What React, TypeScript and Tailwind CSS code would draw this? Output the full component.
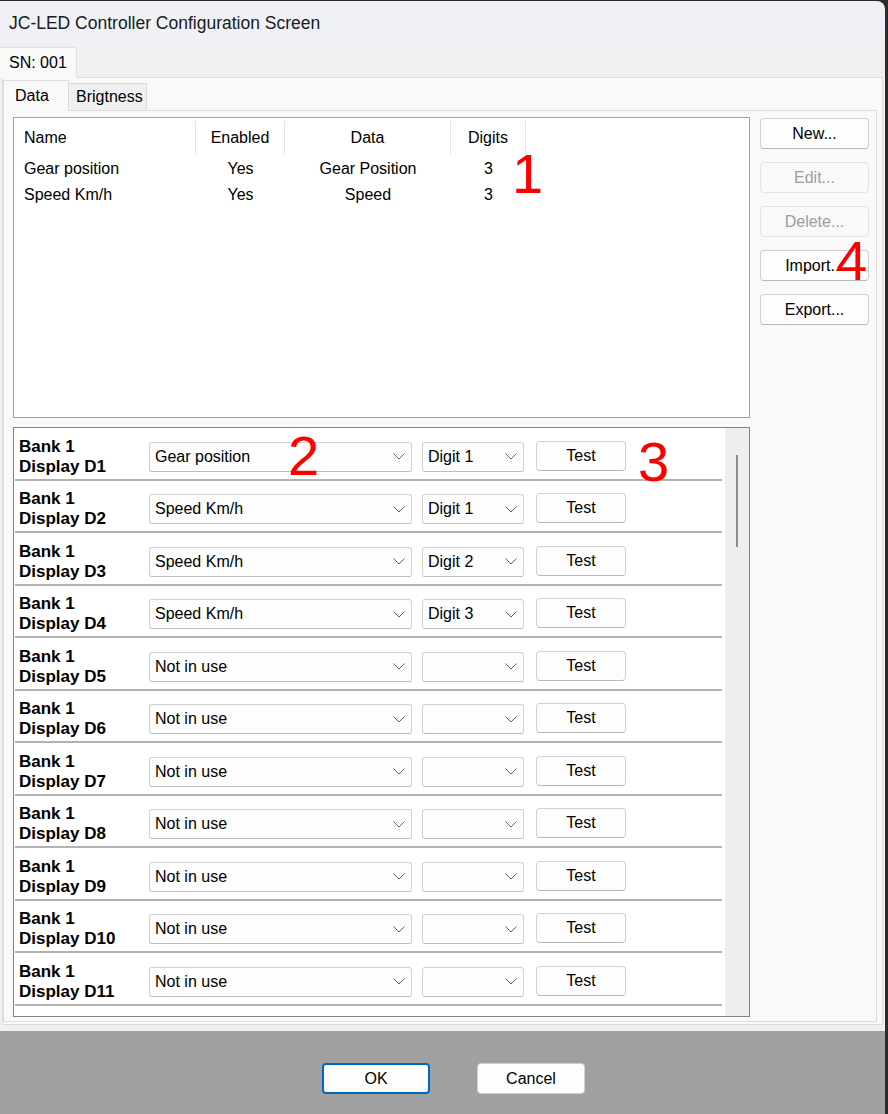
import React from "react";

const Chevron = () => (
  <svg width="12" height="7" viewBox="0 0 12 7" className="shrink-0">
    <path d="M0.5 0.5 L6 6 L11.5 0.5" fill="none" stroke="#606060" strokeWidth="1" />
  </svg>
);

type RowData = { n: string; src: string; digit: string };

const rows: RowData[] = [
  { n: "D1", src: "Gear position", digit: "Digit 1" },
  { n: "D2", src: "Speed Km/h", digit: "Digit 1" },
  { n: "D3", src: "Speed Km/h", digit: "Digit 2" },
  { n: "D4", src: "Speed Km/h", digit: "Digit 3" },
  { n: "D5", src: "Not in use", digit: "" },
  { n: "D6", src: "Not in use", digit: "" },
  { n: "D7", src: "Not in use", digit: "" },
  { n: "D8", src: "Not in use", digit: "" },
  { n: "D9", src: "Not in use", digit: "" },
  { n: "D10", src: "Not in use", digit: "" },
  { n: "D11", src: "Not in use", digit: "" },
];

function SideButton({ label, disabled }: { label: string; disabled?: boolean }) {
  return (
    <div
      className={
        disabled
          ? "h-[31px] rounded-[4px] border border-[#e3e3e3] bg-[#f9f9f9] flex items-center justify-center text-[16px] text-[#9d9d9d]"
          : "h-[31px] rounded-[4px] border border-[#d0d0d0] border-b-[#b8b8b8] bg-[#fdfdfd] flex items-center justify-center text-[16px] text-black"
      }
    >
      {label}
    </div>
  );
}

function DisplayRow({ r }: { r: RowData }) {
  return (
    <div className="h-[52.5px] shrink-0 border-b-2 border-[#b2b2b2] pt-[7px] pl-[4px] flex items-center">
      <div className="w-[130px] shrink-0 text-[17px] font-bold leading-[20px] text-black">
        <div>Bank 1</div>
        <div>Display {r.n}</div>
      </div>
      <div className="w-[263px] h-[30px] rounded-[3px] border border-[#d0d0d0] border-b-[#bdbdbd] bg-[#fdfdfd] flex items-center justify-between pl-[5px] pr-[6px] text-[16px] text-black">
        <span>{r.src}</span>
        <Chevron />
      </div>
      <div className="ml-[10px] w-[102px] h-[30px] rounded-[3px] border border-[#d0d0d0] border-b-[#bdbdbd] bg-[#fdfdfd] flex items-center justify-between pl-[5px] pr-[6px] text-[16px] text-black">
        <span>{r.digit}</span>
        <Chevron />
      </div>
      <div className="ml-[12px] w-[90px] h-[30px] -mt-[2px] rounded-[4px] border border-[#d0d0d0] border-b-[#b8b8b8] bg-[#fdfdfd] flex items-center justify-center text-[16px] text-black">
        Test
      </div>
    </div>
  );
}

export default function App() {
  return (
    <div className="relative w-[888px] h-[1114px] overflow-hidden bg-[#2b2b2b] pt-[1px] pr-[3px] font-['Liberation_Sans',Arial,sans-serif]">
      <div className="w-[885px] h-[1113px] rounded-tr-[8px] overflow-hidden flex flex-col">
        {/* Title bar */}
        <div className="h-[45px] shrink-0 bg-[#eff1f6] flex items-center pl-[9px] text-[17.5px] text-[#1a1a1a]">
          JC-LED Controller Configuration Screen
        </div>

        {/* Body */}
        <div className="h-[985px] shrink-0 bg-[#f0f0f0] flex flex-col">
          {/* outer tab strip */}
          <div className="h-[31px] shrink-0 flex items-end">
            <div className="relative z-10 -mb-px h-[31px] w-[77px] bg-[#f9f9f9] border-r border-t border-[#e0e0e0] flex items-center pl-[9px] text-[16px] text-black">
              SN: 001
            </div>
          </div>
          {/* outer panel */}
          <div className="ml-[2px] w-[881px] h-[948px] border border-[#dcdcdc] bg-[#f9f9f9] flex flex-col pt-[2px]">
            {/* inner tabs */}
            <div className="h-[30px] shrink-0 flex items-end">
              <div className="relative z-10 -mb-px h-[31px] w-[66px] bg-[#f9f9f9] border-t border-r border-l border-[#dcdcdc] flex items-center pl-[11px] text-[16px] text-black">
                Data
              </div>
              <div className="h-[27px] w-[78px] bg-[#f0f0f0] border-t border-r border-[#dadada] flex items-center pl-[7px] text-[16px] text-black">
                Brigtness
              </div>
            </div>
            {/* inner panel */}
            <div className="w-[874px] h-[912px] border border-[#dcdcdc] bg-[#f9f9f9] pl-[9px] pt-[6px] flex">
              {/* left column */}
              <div className="w-[737px] flex flex-col">
                {/* list view */}
                <div className="h-[301px] border border-[#a0a0a0] bg-white flex flex-col pt-[1px]">
                  <div className="h-[37px] flex text-[16px] text-black">
                    <div className="w-[182px] border-r border-[#e5e5e5] my-[2px] flex items-center pl-[10px]">Name</div>
                    <div className="w-[89px] border-r border-[#e5e5e5] my-[2px] flex items-center justify-center">Enabled</div>
                    <div className="w-[166px] border-r border-[#e5e5e5] my-[2px] flex items-center justify-center">Data</div>
                    <div className="w-[75px] border-r border-[#e5e5e5] my-[2px] flex items-center justify-center">Digits</div>
                  </div>
                  {[
                    ["Gear position", "Yes", "Gear Position", "3"],
                    ["Speed Km/h", "Yes", "Speed", "3"],
                  ].map((r) => (
                    <div key={r[0]} className="h-[26px] flex items-center text-[16px] text-black">
                      <div className="w-[182px] pl-[10px]">{r[0]}</div>
                      <div className="w-[89px] text-center">{r[1]}</div>
                      <div className="w-[166px] text-center">{r[2]}</div>
                      <div className="w-[75px] text-center">{r[3]}</div>
                    </div>
                  ))}
                </div>
                {/* display panel */}
                <div className="mt-[9px] h-[590px] border border-[#828282] bg-white flex">
                  <div className="w-[711px] pl-[1px] pr-[3px] flex flex-col overflow-hidden">
                    {rows.map((r) => (
                      <DisplayRow key={r.n} r={r} />
                    ))}
                  </div>
                  <div className="w-[24px] bg-[#eeeeee] pl-[11px] pt-[27px]">
                    <div className="w-[2px] h-[92px] bg-[#8a8a8a]" />
                  </div>
                </div>
              </div>
              {/* right column */}
              <div className="ml-[10px] w-[109px] mt-[1px] flex flex-col gap-[13px]">
                <SideButton label="New..." />
                <SideButton label="Edit..." disabled />
                <SideButton label="Delete..." disabled />
                <SideButton label="Import..." />
                <SideButton label="Export..." />
              </div>
            </div>
          </div>
        </div>

        {/* Footer */}
        <div className="flex-1 bg-[#a0a0a0] flex items-start pl-[322px] pt-[32px] gap-[47px]">
          <div className="w-[108px] h-[31px] rounded-[4px] border-2 border-[#0067c0] bg-[#fdfdfd] flex items-center justify-center text-[16px] text-black">
            OK
          </div>
          <div className="w-[108px] h-[31px] rounded-[4px] border border-[#d0d0d0] bg-[#fdfdfd] flex items-center justify-center text-[16px] text-black">
            Cancel
          </div>
        </div>
      </div>

      {/* red annotations */}
      <div className="absolute left-[512px] top-[146px] text-[56px] leading-none text-[#ff0000]">1</div>
      <div className="absolute left-[288px] top-[428px] text-[56px] leading-none text-[#ff0000]">2</div>
      <div className="absolute left-[638px] top-[434px] text-[56px] leading-none text-[#ff0000]">3</div>
      <div className="absolute left-[836px] top-[233px] text-[56px] leading-none text-[#ff0000]">4</div>
    </div>
  );
}
